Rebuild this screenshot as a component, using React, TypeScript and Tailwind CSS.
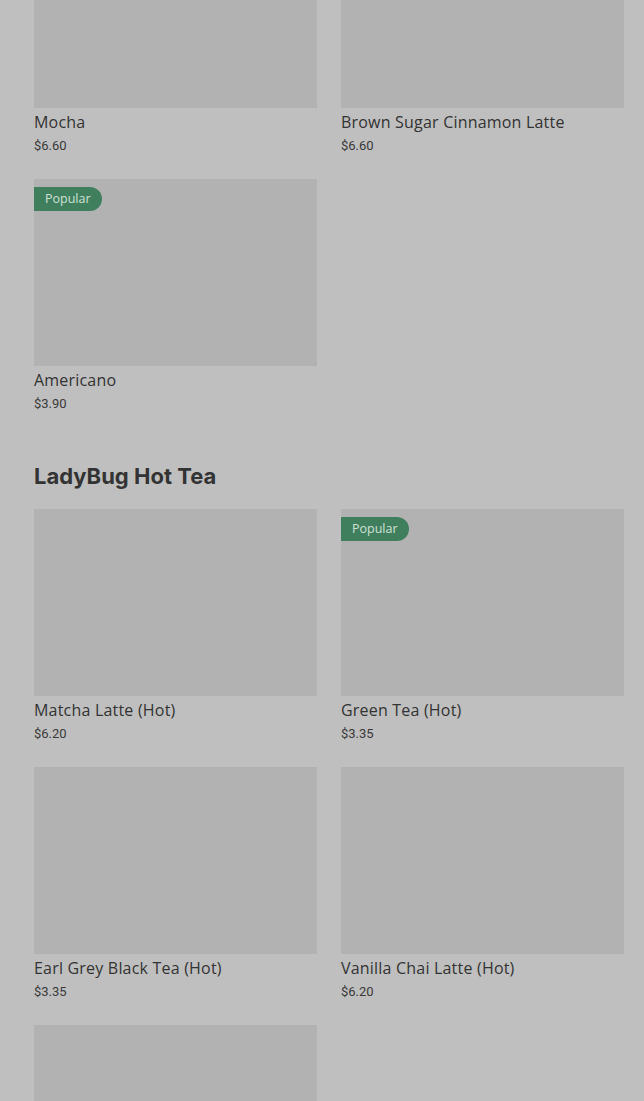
import React from "react";

type Item = { name: string; price: string; popular?: boolean };

const coffee: Item[] = [
  { name: "Mocha", price: "$6.60" },
  { name: "Brown Sugar Cinnamon Latte", price: "$6.60" },
  { name: "Americano", price: "$3.90", popular: true },
];

const tea: Item[] = [
  { name: "Matcha Latte (Hot)", price: "$6.20" },
  { name: "Green Tea (Hot)", price: "$3.35", popular: true },
  { name: "Earl Grey Black Tea (Hot)", price: "$3.35" },
  { name: "Vanilla Chai Latte (Hot)", price: "$6.20" },
  { name: "Jasmine Green Tea (Hot)", price: "$3.35" },
];

function Card({ item }: { item: Item }) {
  return (
    <div className="flex flex-col">
      <div className="relative h-[187px] bg-[#b2b2b2]">
        {item.popular && (
          <span className="absolute left-0 top-[8px] h-[24px] px-[11px] flex items-center rounded-r-full bg-[#3f7f5e] text-[12.5px] text-[#cfe0d5]" style={{ fontFamily: "'Open Sans', sans-serif" }}>
            Popular
          </span>
        )}
      </div>
      <div className="mt-[4px] text-[16px] leading-5 font-medium tracking-[0.2px] text-[#333333]" style={{ fontFamily: "'Open Sans', sans-serif" }}>{item.name}</div>
      <div className="mt-[5px] text-[13px] leading-[18px] text-[#3a3a3a]">{item.price}</div>
    </div>
  );
}

export default function App() {
  return (
    <div className="h-[1101px] bg-[#bfbfbf] pl-[34px] pr-[20px] overflow-hidden" style={{ fontFamily: "Roboto, 'Liberation Sans', sans-serif" }}>
      <div className="-mt-[79px]">
        <div className="grid grid-cols-2 gap-x-6 gap-y-6">
          {coffee.map((c) => (
            <Card key={c.name} item={c} />
          ))}
        </div>

        <h2 className="mt-[49px] mb-[19px] text-[22px] leading-7 font-bold text-[#333333]" style={{ fontFamily: "Inter, 'Liberation Sans', sans-serif" }}>
          LadyBug Hot Tea
        </h2>

        <div className="grid grid-cols-2 gap-x-6 gap-y-6">
          {tea.map((c) => (
            <Card key={c.name} item={c} />
          ))}
        </div>
      </div>
    </div>
  );
}
